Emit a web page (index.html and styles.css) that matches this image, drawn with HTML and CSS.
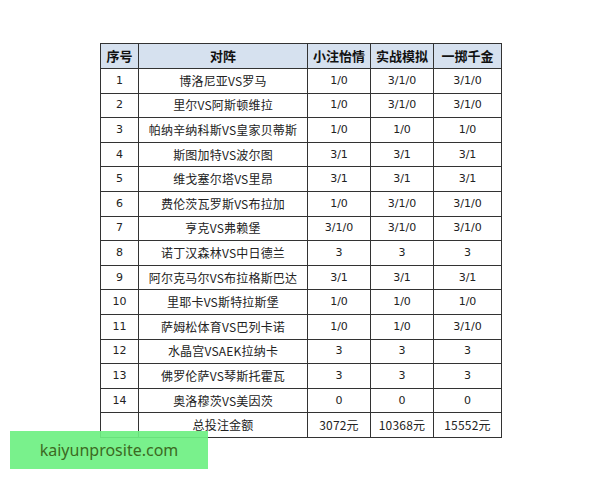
FILE: index.html
```html
<!DOCTYPE html>
<html lang="zh">
<head>
<meta charset="utf-8">
<link rel="stylesheet" href="styles.css">
</head>
<body>
<div class="page">
  <table class="grid">
    <colgroup>
      <col class="c-no"><col class="c-match"><col class="c-a"><col class="c-b"><col class="c-c">
    </colgroup>
    <thead>
      <tr><th>序号</th><th>对阵</th><th>小注怡情</th><th>实战模拟</th><th>一掷千金</th></tr>
    </thead>
    <tbody>
      <tr><td>1</td><td class="cn">博洛尼亚VS罗马</td><td>1/0</td><td>3/1/0</td><td>3/1/0</td></tr>
      <tr><td>2</td><td class="cn">里尔VS阿斯顿维拉</td><td>1/0</td><td>3/1/0</td><td>3/1/0</td></tr>
      <tr><td>3</td><td class="cn">帕纳辛纳科斯VS皇家贝蒂斯</td><td>1/0</td><td>1/0</td><td>1/0</td></tr>
      <tr><td>4</td><td class="cn">斯图加特VS波尔图</td><td>3/1</td><td>3/1</td><td>3/1</td></tr>
      <tr><td>5</td><td class="cn">维戈塞尔塔VS里昂</td><td>3/1</td><td>3/1</td><td>3/1</td></tr>
      <tr><td>6</td><td class="cn">费伦茨瓦罗斯VS布拉加</td><td>1/0</td><td>3/1/0</td><td>3/1/0</td></tr>
      <tr><td>7</td><td class="cn">亨克VS弗赖堡</td><td>3/1/0</td><td>3/1/0</td><td>3/1/0</td></tr>
      <tr><td>8</td><td class="cn">诺丁汉森林VS中日德兰</td><td>3</td><td>3</td><td>3</td></tr>
      <tr><td>9</td><td class="cn">阿尔克马尔VS布拉格斯巴达</td><td>3/1</td><td>3/1</td><td>3/1</td></tr>
      <tr><td>10</td><td class="cn">里耶卡VS斯特拉斯堡</td><td>1/0</td><td>1/0</td><td>1/0</td></tr>
      <tr><td>11</td><td class="cn">萨姆松体育VS巴列卡诺</td><td>1/0</td><td>1/0</td><td>3/1/0</td></tr>
      <tr><td>12</td><td class="cn">水晶宫VSAEK拉纳卡</td><td>3</td><td>3</td><td>3</td></tr>
      <tr><td>13</td><td class="cn">佛罗伦萨VS琴斯托霍瓦</td><td>3</td><td>3</td><td>3</td></tr>
      <tr><td>14</td><td class="cn">奥洛穆茨VS美因茨</td><td>0</td><td>0</td><td>0</td></tr>
      <tr><td></td><td class="cn">总投注金额</td><td class="cn">3072元</td><td class="cn">10368元</td><td class="cn">15552元</td></tr>
    </tbody>
  </table>
  <div class="watermark">kaiyunprosite.com</div>
</div>
</body>
</html>
```

FILE: styles.css
```css
html, body {
  margin: 0;
  padding: 0;
  background: #ffffff;
}

.page {
  position: relative;
  width: 600px;
  height: 480px;
  padding: 43px 0 0 100px;
  box-sizing: border-box;
}

.grid {
  border-collapse: collapse;
  table-layout: fixed;
  width: 401px;
  font-family: "DejaVu Sans", "Noto Sans CJK SC", sans-serif;
  font-size: 11px;
  color: #222;
}

.c-no { width: 38px; }
.c-match { width: 169px; }
.c-a { width: 63px; }
.c-b { width: 63px; }
.c-c { width: 68px; }

.grid th,
.grid td {
  border: 1px solid #333;
  text-align: center;
  vertical-align: middle;
  padding: 0;
  line-height: 14px;
}

.grid th {
  height: 24px;
  background: #d6e1ef;
  font-family: "Noto Sans CJK SC", sans-serif;
  font-weight: bold;
  font-size: 13px;
  color: #111;
}

.grid td {
  height: 23.6px;
}

.grid td.cn {
  font-family: "Noto Sans CJK SC", sans-serif;
  font-size: 12px;
  letter-spacing: 0.2px;
}

.watermark {
  position: absolute;
  left: 10px;
  top: 431px;
  width: 198px;
  height: 38px;
  background: rgba(110, 240, 130, 0.92);
  color: #3c6a22;
  font-family: "Noto Sans", sans-serif;
  font-size: 16px;
  line-height: 38px;
  text-align: center;
}
```
